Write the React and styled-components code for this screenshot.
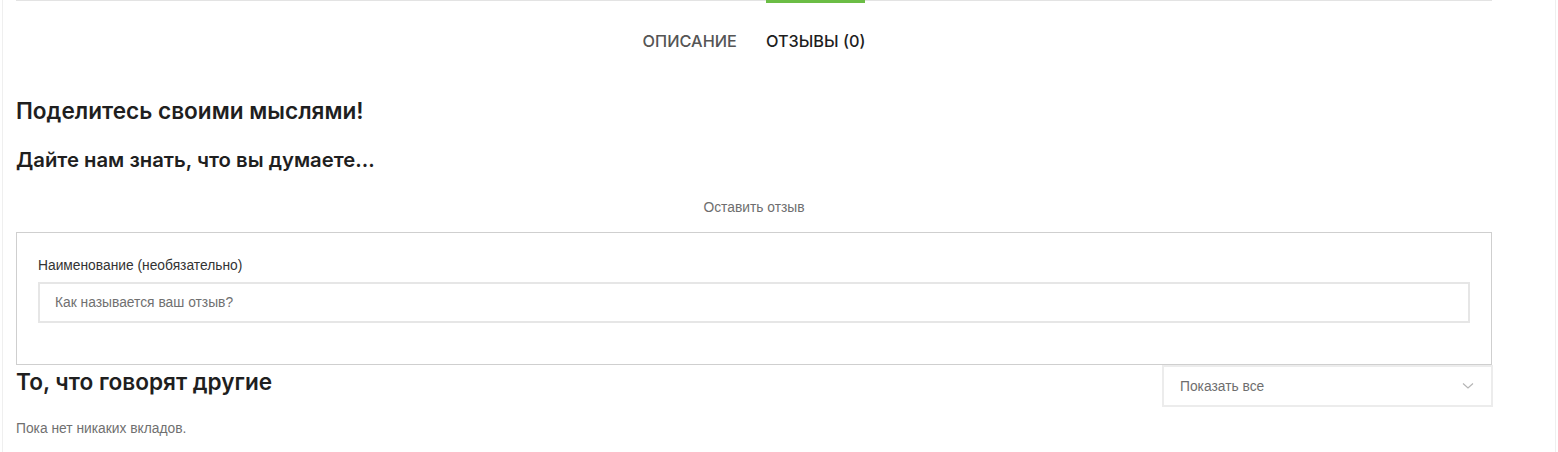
import React from "react";
import styled, { createGlobalStyle } from "styled-components";

const Global = createGlobalStyle`
  html, body { margin: 0; padding: 0; background: #fff; }
  body { font-family: "Liberation Sans", Arial, sans-serif; color: #333; }
  * { box-sizing: border-box; }
`;

const Frame = styled.div`
  margin: 0 2px;
  border-left: 1px solid #efefef;
  border-right: 1px solid #efefef;
  min-height: 452px;
  padding: 0 63px 0 13px;
`;

const Tabs = styled.div`
  display: flex;
  justify-content: center;
  gap: 29px;
  border-top: 1px solid #e3e3e3;
`;

const Tab = styled.div`
  margin-top: -1px;
  border-top: 3px solid ${(p) => (p.$active ? "#6bbd45" : "transparent")};
  padding-top: 29px;
  font-family: Inter, "Noto Sans", sans-serif;
  font-size: 16.3px;
  font-weight: 500;
  color: ${(p) => (p.$active ? "#1e1e1e" : "#555")};
  line-height: 18px;
`;

const Heading = styled.h2`
  margin: ${(p) => p.$m || "0"};
  font-family: Inter, "Noto Sans", sans-serif;
  font-weight: 600;
  font-size: ${(p) => p.$size || "22.6px"};
  color: #1f1f1f;
  line-height: 26px;
`;

const LeaveLink = styled.div`
  text-align: center;
  font-size: 13.8px;
  color: #6e6e6e;
  margin-top: 27px;
  line-height: 16px;
`;

const FormBox = styled.div`
  margin-top: 16px;
  border: 1px solid #cfcfcf;
  padding: 25px 21px 41px 21px;
`;

const Label = styled.label`
  display: block;
  font-size: 13.8px;
  color: #333;
  line-height: 16px;
  margin-bottom: 8px;
`;

const Input = styled.div`
  height: 41px;
  border: 2px solid #e6e6e6;
  display: flex;
  align-items: center;
  padding-left: 15px;
  font-size: 13.8px;
  color: #707070;
`;

const ReviewsRow = styled.div`
  display: flex;
  justify-content: space-between;
  align-items: flex-start;
`;

const Select = styled.div`
  width: 331px;
  height: 42px;
  border: 2px solid #ececec;
  display: flex;
  align-items: center;
  justify-content: space-between;
  padding: 0 17px 0 16px;
  font-size: 13.8px;
  color: #6e6e6e;
  margin-right: -1px;
`;

const Empty = styled.div`
  font-size: 13.8px;
  color: #707070;
  margin-top: 14px;
  line-height: 16px;
`;

export default function App() {
  return (
    <>
      <Global />
      <Frame>
        <Tabs>
          <Tab>ОПИСАНИЕ</Tab>
          <Tab $active>ОТЗЫВЫ (0)</Tab>
        </Tabs>
        <Heading $m="48px 0 0 0">Поделитесь своими мыслями!</Heading>
        <Heading $size="20.3px" $m="23px 0 0 0">
          Дайте нам знать, что вы думаете...
        </Heading>
        <LeaveLink>Оставить отзыв</LeaveLink>
        <FormBox>
          <Label>Наименование (необязательно)</Label>
          <Input>Как называется ваш отзыв?</Input>
        </FormBox>
        <ReviewsRow>
          <Heading $m="4px 0 0 0">То, что говорят другие</Heading>
          <Select>
            <span>Показать все</span>
            <svg width="12" height="8" viewBox="0 0 12 8">
              <path d="M1 1.5 L6 6 L11 1.5" fill="none" stroke="#b5b5b5" strokeWidth="1.2" />
            </svg>
          </Select>
        </ReviewsRow>
        <Empty>Пока нет никаких вкладов.</Empty>
      </Frame>
    </>
  );
}
